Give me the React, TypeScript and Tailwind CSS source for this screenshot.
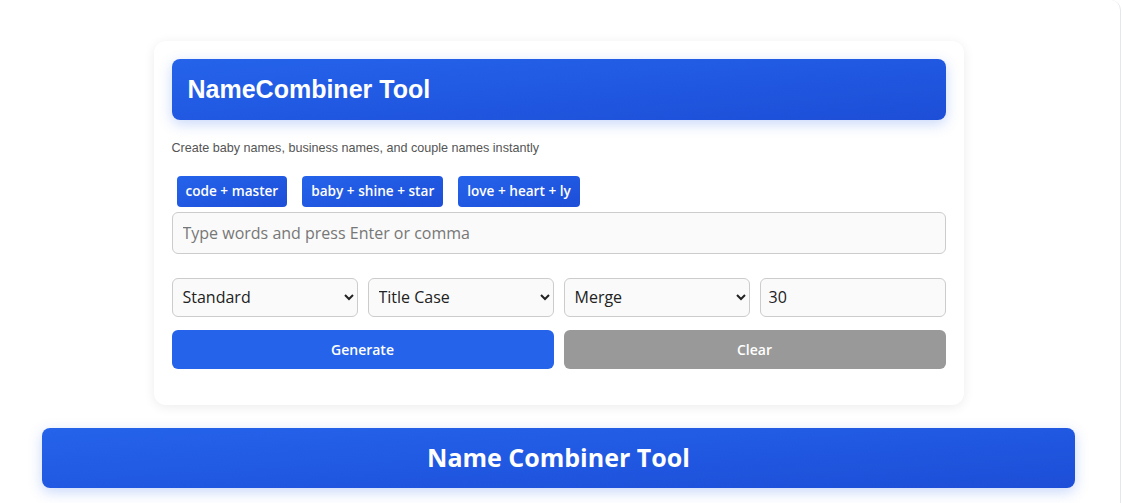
import React from 'react';

const chips = ['code + master', 'baby + shine + star', 'love + heart + ly'];

export default function App() {
  return (
    <div className="min-h-[503px] w-[1122px] bg-white font-['Open_Sans',sans-serif]">
      <div className="h-[503px] w-[1121px] overflow-hidden rounded-tr-[10px] border-r border-[#e5e7eb] bg-white">
        <div className="flex flex-col items-center pr-[3px] pt-[41px]">
          <div className="w-[810px] rounded-xl bg-white p-[18px] pb-[36px] shadow-[0_2px_12px_rgba(0,0,0,0.08)]">
            <div className="flex h-[61px] items-center rounded-lg bg-gradient-to-br from-[#2563eb] to-[#1d4ed8] px-4 shadow-[0_4px_14px_rgba(37,99,235,0.25)]">
              <h1 className="font-['Liberation_Sans',Arial,sans-serif] text-[25px] font-bold text-white">NameCombiner Tool</h1>
            </div>
            <p className="mt-[19px] font-['Liberation_Sans',Arial,sans-serif] text-[12.6px] text-[#555]">
              Create baby names, business names, and couple names instantly
            </p>
            <div className="mt-[18px] flex gap-[15px] px-[5px]">
              {chips.map(c => (
                <span
                  key={c}
                  className="flex h-[31px] items-center rounded bg-gradient-to-br from-[#2563eb] to-[#1d4ed8] px-[9px] text-[13.6px] font-semibold text-white"
                >
                  {c}
                </span>
              ))}
            </div>
            <input
              placeholder="Type words and press Enter or comma"
              className="mt-[5px] h-[42px] w-full rounded-md border border-[#ccc] bg-[#fafafa] px-[10px] text-[16px] text-[#333] placeholder:text-[#777] outline-none"
            />
            <div className="mt-[24px] grid grid-cols-4 gap-[10px]">
              <select className="h-[39px] rounded-md border border-[#ccc] bg-[#fafafa] px-[6px] text-[16px] text-[#222]">
                <option>Standard</option>
              </select>
              <select className="h-[39px] rounded-md border border-[#ccc] bg-[#fafafa] px-[6px] text-[16px] text-[#222]">
                <option>Title Case</option>
              </select>
              <select className="h-[39px] rounded-md border border-[#ccc] bg-[#fafafa] px-[6px] text-[16px] text-[#222]">
                <option>Merge</option>
              </select>
              <input
                defaultValue="30"
                className="h-[39px] rounded-md border border-[#ccc] bg-[#fafafa] px-[8px] text-[16px] text-[#222] outline-none"
              />
            </div>
            <div className="mt-[13px] grid grid-cols-2 gap-[10px]">
              <button className="h-[39px] rounded-md bg-[#2563eb] text-[14px] font-semibold text-white">Generate</button>
              <button className="h-[39px] rounded-md bg-[#999] text-[14px] font-semibold text-white">Clear</button>
            </div>
          </div>
          <div className="mt-[23px] flex h-[60px] w-[1033px] items-center justify-center rounded-lg bg-gradient-to-br from-[#2563eb] to-[#1d4ed8] shadow-[0_4px_14px_rgba(37,99,235,0.25)]">
            <h2 className="text-[25px] font-bold text-white">Name Combiner Tool</h2>
          </div>
        </div>
      </div>
    </div>
  );
}
